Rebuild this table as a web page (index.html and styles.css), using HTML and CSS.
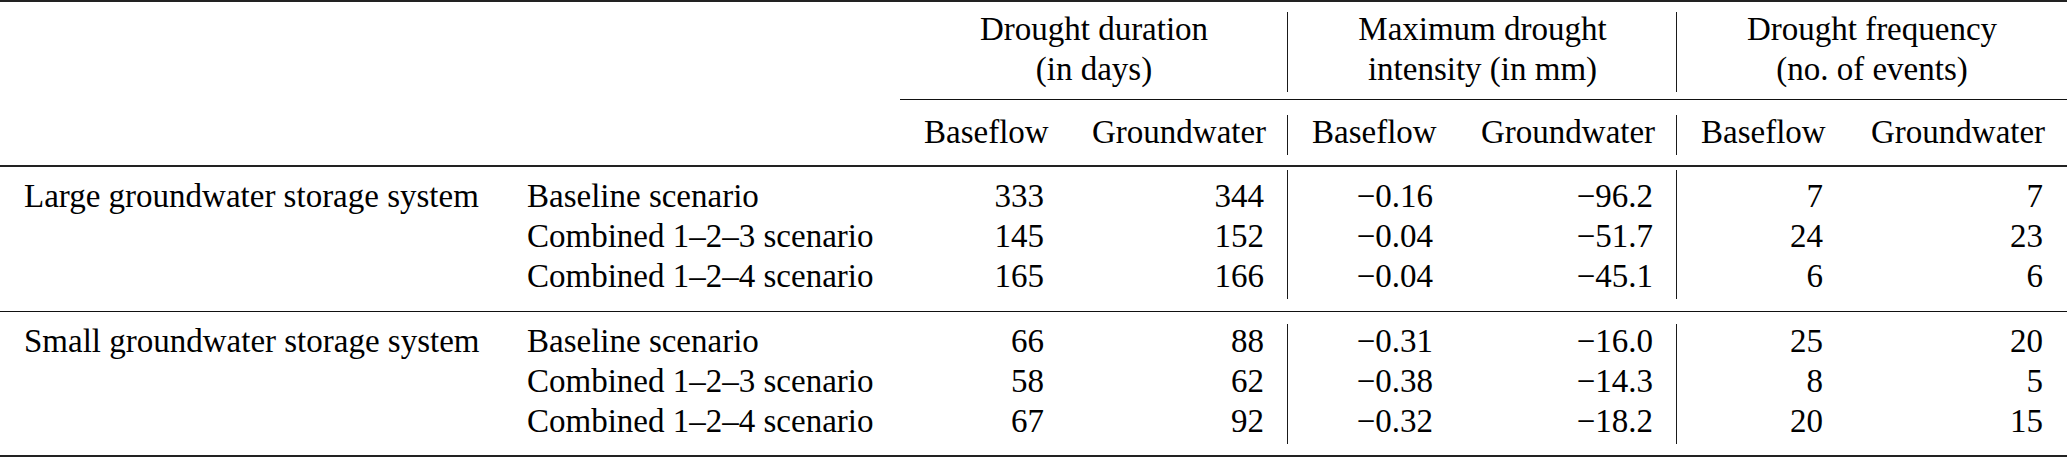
FILE: index.html
```html
<!DOCTYPE html>
<html lang="en">
<head>
<meta charset="utf-8">
<title>Drought characteristics</title>
<link rel="stylesheet" href="styles.css">
</head>
<body>
<table class="tbl">
  <colgroup>
    <col class="w-group">
    <col class="w-scen">
    <col class="w-a">
    <col class="w-b">
    <col class="w-c">
    <col class="w-b">
    <col class="w-d">
    <col class="w-b">
  </colgroup>
  <tbody>
    <tr class="rule rule-thick"><td colspan="8"></td></tr>
    <tr class="gap gap-10"><td colspan="8"></td></tr>
    <tr class="head">
      <td colspan="2"></td>
      <td colspan="2" class="sep"><div class="hd">Drought duration<br>(in days)</div></td>
      <td colspan="2" class="sep"><div class="hd">Maximum drought<br>intensity (in mm)</div></td>
      <td colspan="2"><div class="hd">Drought frequency<br>(no. of events)</div></td>
    </tr>
    <tr class="gap gap-7"><td colspan="8"></td></tr>
    <tr class="cmid"><td colspan="2"></td><td colspan="6" class="cmid-line"></td></tr>
    <tr class="gap gap-15"><td colspan="8"></td></tr>
    <tr class="row sub">
      <td></td>
      <td></td>
      <td class="num">Baseflow</td>
      <td class="num sep">Groundwater</td>
      <td class="num">Baseflow</td>
      <td class="num sep">Groundwater</td>
      <td class="num">Baseflow</td>
      <td class="num">Groundwater</td>
    </tr>
    <tr class="gap gap-10"><td colspan="8"></td></tr>
    <tr class="rule rule-thick"><td colspan="8"></td></tr>
    <tr class="gap gap-3"><td colspan="8"></td></tr>
    <tr class="gap gap-9">
      <td colspan="2"></td><td></td><td class="sep"></td><td></td><td class="sep"></td><td colspan="2"></td>
    </tr>

    <tr class="row">
      <td class="lbl">Large groundwater storage system</td>
      <td class="lbl">Baseline scenario</td>
      <td class="num">333</td>
      <td class="num sep">344</td>
      <td class="num">&minus;0.16</td>
      <td class="num sep">&minus;96.2</td>
      <td class="num">7</td>
      <td class="num">7</td>
    </tr>
    <tr class="row">
      <td class="lbl"></td>
      <td class="lbl">Combined 1&ndash;2&ndash;3 scenario</td>
      <td class="num">145</td>
      <td class="num sep">152</td>
      <td class="num">&minus;0.04</td>
      <td class="num sep">&minus;51.7</td>
      <td class="num">24</td>
      <td class="num">23</td>
    </tr>
    <tr class="row">
      <td class="lbl"></td>
      <td class="lbl">Combined 1&ndash;2&ndash;4 scenario</td>
      <td class="num">165</td>
      <td class="num sep">166</td>
      <td class="num">&minus;0.04</td>
      <td class="num sep">&minus;45.1</td>
      <td class="num">6</td>
      <td class="num">6</td>
    </tr>

    <tr class="gap gap-12"><td colspan="8"></td></tr>
    <tr class="rule rule-thin"><td colspan="8"></td></tr>
    <tr class="gap gap-12"><td colspan="8"></td></tr>

    <tr class="row">
      <td class="lbl">Small groundwater storage system</td>
      <td class="lbl">Baseline scenario</td>
      <td class="num">66</td>
      <td class="num sep">88</td>
      <td class="num">&minus;0.31</td>
      <td class="num sep">&minus;16.0</td>
      <td class="num">25</td>
      <td class="num">20</td>
    </tr>
    <tr class="row">
      <td class="lbl"></td>
      <td class="lbl">Combined 1&ndash;2&ndash;3 scenario</td>
      <td class="num">58</td>
      <td class="num sep">62</td>
      <td class="num">&minus;0.38</td>
      <td class="num sep">&minus;14.3</td>
      <td class="num">8</td>
      <td class="num">5</td>
    </tr>
    <tr class="row">
      <td class="lbl"></td>
      <td class="lbl">Combined 1&ndash;2&ndash;4 scenario</td>
      <td class="num">67</td>
      <td class="num sep">92</td>
      <td class="num">&minus;0.32</td>
      <td class="num sep">&minus;18.2</td>
      <td class="num">20</td>
      <td class="num">15</td>
    </tr>

    <tr class="gap gap-11"><td colspan="8"></td></tr>
    <tr class="rule rule-thick"><td colspan="8"></td></tr>
  </tbody>
</table>
</body>
</html>
```

FILE: styles.css
```css
html, body {
  margin: 0;
  padding: 0;
  background: #ffffff;
}

.tbl {
  width: 2067px;
  table-layout: fixed;
  border-collapse: separate;
  border-spacing: 0;
  font-family: "Liberation Serif", "Times New Roman", serif;
  font-size: 33px;
  color: #000000;
}

.w-group { width: 503px; }
.w-scen  { width: 397px; }
.w-a     { width: 168px; }
.w-b     { width: 220px; }
.w-c     { width: 169px; }
.w-d     { width: 170px; }

.tbl td {
  padding: 0 24px;
  white-space: nowrap;
}

/* spacing rows */
.gap td { padding: 0; height: 0; }
.gap-3 td  { height: 3px; }
.gap-7 td  { height: 7px; }
.gap-9 td  { height: 9px; }
.gap-10 td { height: 10px; }
.gap-11 td { height: 11px; }
.gap-12 td { height: 12px; }
.gap-15 td { height: 15px; }

/* horizontal rules */
.rule td {
  padding: 0;
  height: 0;
}
.rule-thick td { border-top: 2px solid #222222; }
.rule-thin td  { border-top: 1px solid #111111; }

.cmid td {
  padding: 0;
  height: 0;
}
.cmid .cmid-line { border-top: 1px solid #111111; }

/* header */
.head td {
  line-height: 40px;
  text-align: center;
  vertical-align: top;
}
.hd {
  margin: -3px 0 3px;
}

/* body rows */
.row td {
  line-height: 34px;
  padding-bottom: 6px;
  vertical-align: top;
}

.lbl { text-align: left; }
.num { text-align: right; }

.tbl td.sep {
  border-right: 1px solid #1a1a1a;
  padding-right: 23px;
}
```
